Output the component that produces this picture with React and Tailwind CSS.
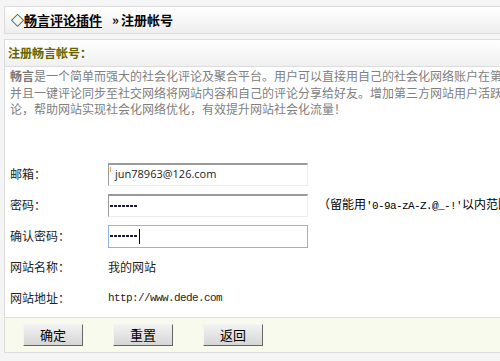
const cjk = { fontFamily: '"Noto Sans CJK SC", "Liberation Sans", sans-serif' };

const intro = [
  '是一个简单而强大的社会化评论及聚合平台。用户可以直接用自己的社会化网络账户在第三方网站发表评论，',
  '并且一键评论同步至社交网络将网站内容和自己的评论分享给好友。增加第三方网站用户活跃度，增加网站流量，实现评',
  '论，帮助网站实现社会化网络优化，有效提升网站社会化流量！',
];

function Field({ focused, children }) {
  return (
    <div
      className={`flex h-[23px] w-[200px] items-center border bg-white pl-[1px] ${
        focused
          ? 'border-[#8cb4ec]'
          : 'border-t-[#9a9a9a] border-l-[#9a9a9a] border-r-[#ececec] border-b-[#ececec] border-t-2'
      }`}
    >
      {children}
    </div>
  );
}

function Dots({ caret }) {
  return (
    <span className="flex items-center">
      {Array.from({ length: 7 }).map((_, i) => (
        <span key={i} className="mr-[1px] h-[2px] w-[3px] bg-[#1a1a3a]" />
      ))}
      {caret ? <span className="ml-[1px] h-[15px] w-px bg-black" /> : null}
    </span>
  );
}

function Row({ label, children }) {
  return (
    <div className="flex h-[31px] items-center">
      <div className="w-[98px] shrink-0 text-[12px] text-[#222]">{label}</div>
      {children}
    </div>
  );
}

function Btn({ children }) {
  return (
    <button className="h-[22px] w-[60px] border border-t-[#f4f4f4] border-l-[#f4f4f4] border-r-[#666] border-b-[#666] bg-gradient-to-b from-[#f2f2f2] to-[#d6d6d6] text-[13px] leading-none text-black">
      {children}
    </button>
  );
}

export default function App() {
  return (
    <div className="h-[361px] w-[500px] overflow-hidden bg-[#f5f5f5] pl-[4px] pt-[6px]" style={cjk}>
      <div className="flex h-[28px] w-[700px] items-center border border-[#dcdcdc] bg-gradient-to-b from-white to-[#eeeeee] pl-[6px] text-[13px] font-bold text-black">
        <span>◇</span>
        <span className="underline underline-offset-2">畅言评论插件</span>
        <span className="ml-[10px] mr-[2px]">»</span>
        <span>注册帐号</span>
      </div>

      <div className="mt-[5px] w-[700px] border border-[#dcdcdc] bg-white">
        <div className="flex h-[27px] items-center border-b border-[#dcdcdc] bg-gradient-to-b from-white to-[#f0f0f0] pl-[3px] text-[12px] font-bold text-[#666600]">
          注册畅言帐号：
        </div>

        <div className="pl-[5px] pt-[1px] text-[12px] leading-[16.5px] text-[#808080]">
          {intro.map((line, i) => (
            <div key={i} className="whitespace-nowrap">
              {i === 0 ? <b className="text-[#777]">畅言</b> : null}
              {line}
            </div>
          ))}
        </div>

        <div className="mt-[41px] pl-[5px]">
          <Row label="邮箱：">
            <Field>
              <span className="mr-[4px] mt-[2px] h-[5px] w-px self-start bg-[#e0a850]" />
              <span className="text-[11px] text-[#222]" style={{ fontFamily: '"Open Sans", sans-serif' }}>
                jun78963@126.com
              </span>
            </Field>
          </Row>
          <Row label="密码：">
            <Field>
              <Dots />
            </Field>
            <span className="ml-[10px] whitespace-nowrap text-[12px] text-black">
              （留能用
              <span className="text-[11px] tracking-[-0.6px]" style={{ fontFamily: '"Liberation Mono", monospace' }}>
                '0-9a-zA-Z.@_-!'
              </span>
              以内范围的字符）
            </span>
          </Row>
          <Row label="确认密码：">
            <Field focused>
              <Dots caret />
            </Field>
          </Row>
          <Row label="网站名称：">
            <span className="text-[12px] text-[#222]">我的网站</span>
          </Row>
          <Row label="网站地址：">
            <span className="text-[11px] tracking-[-0.6px] text-[#222]" style={{ fontFamily: '"Liberation Mono", monospace' }}>
              http://www.dede.com
            </span>
          </Row>
        </div>

        <div className="mt-[3px] flex h-[35px] items-center gap-[30px] border-t border-[#dcdcdc] bg-[#f9faee] pl-[18px]">
          <Btn>确定</Btn>
          <Btn>重置</Btn>
          <Btn>返回</Btn>
        </div>
      </div>
    </div>
  );
}
